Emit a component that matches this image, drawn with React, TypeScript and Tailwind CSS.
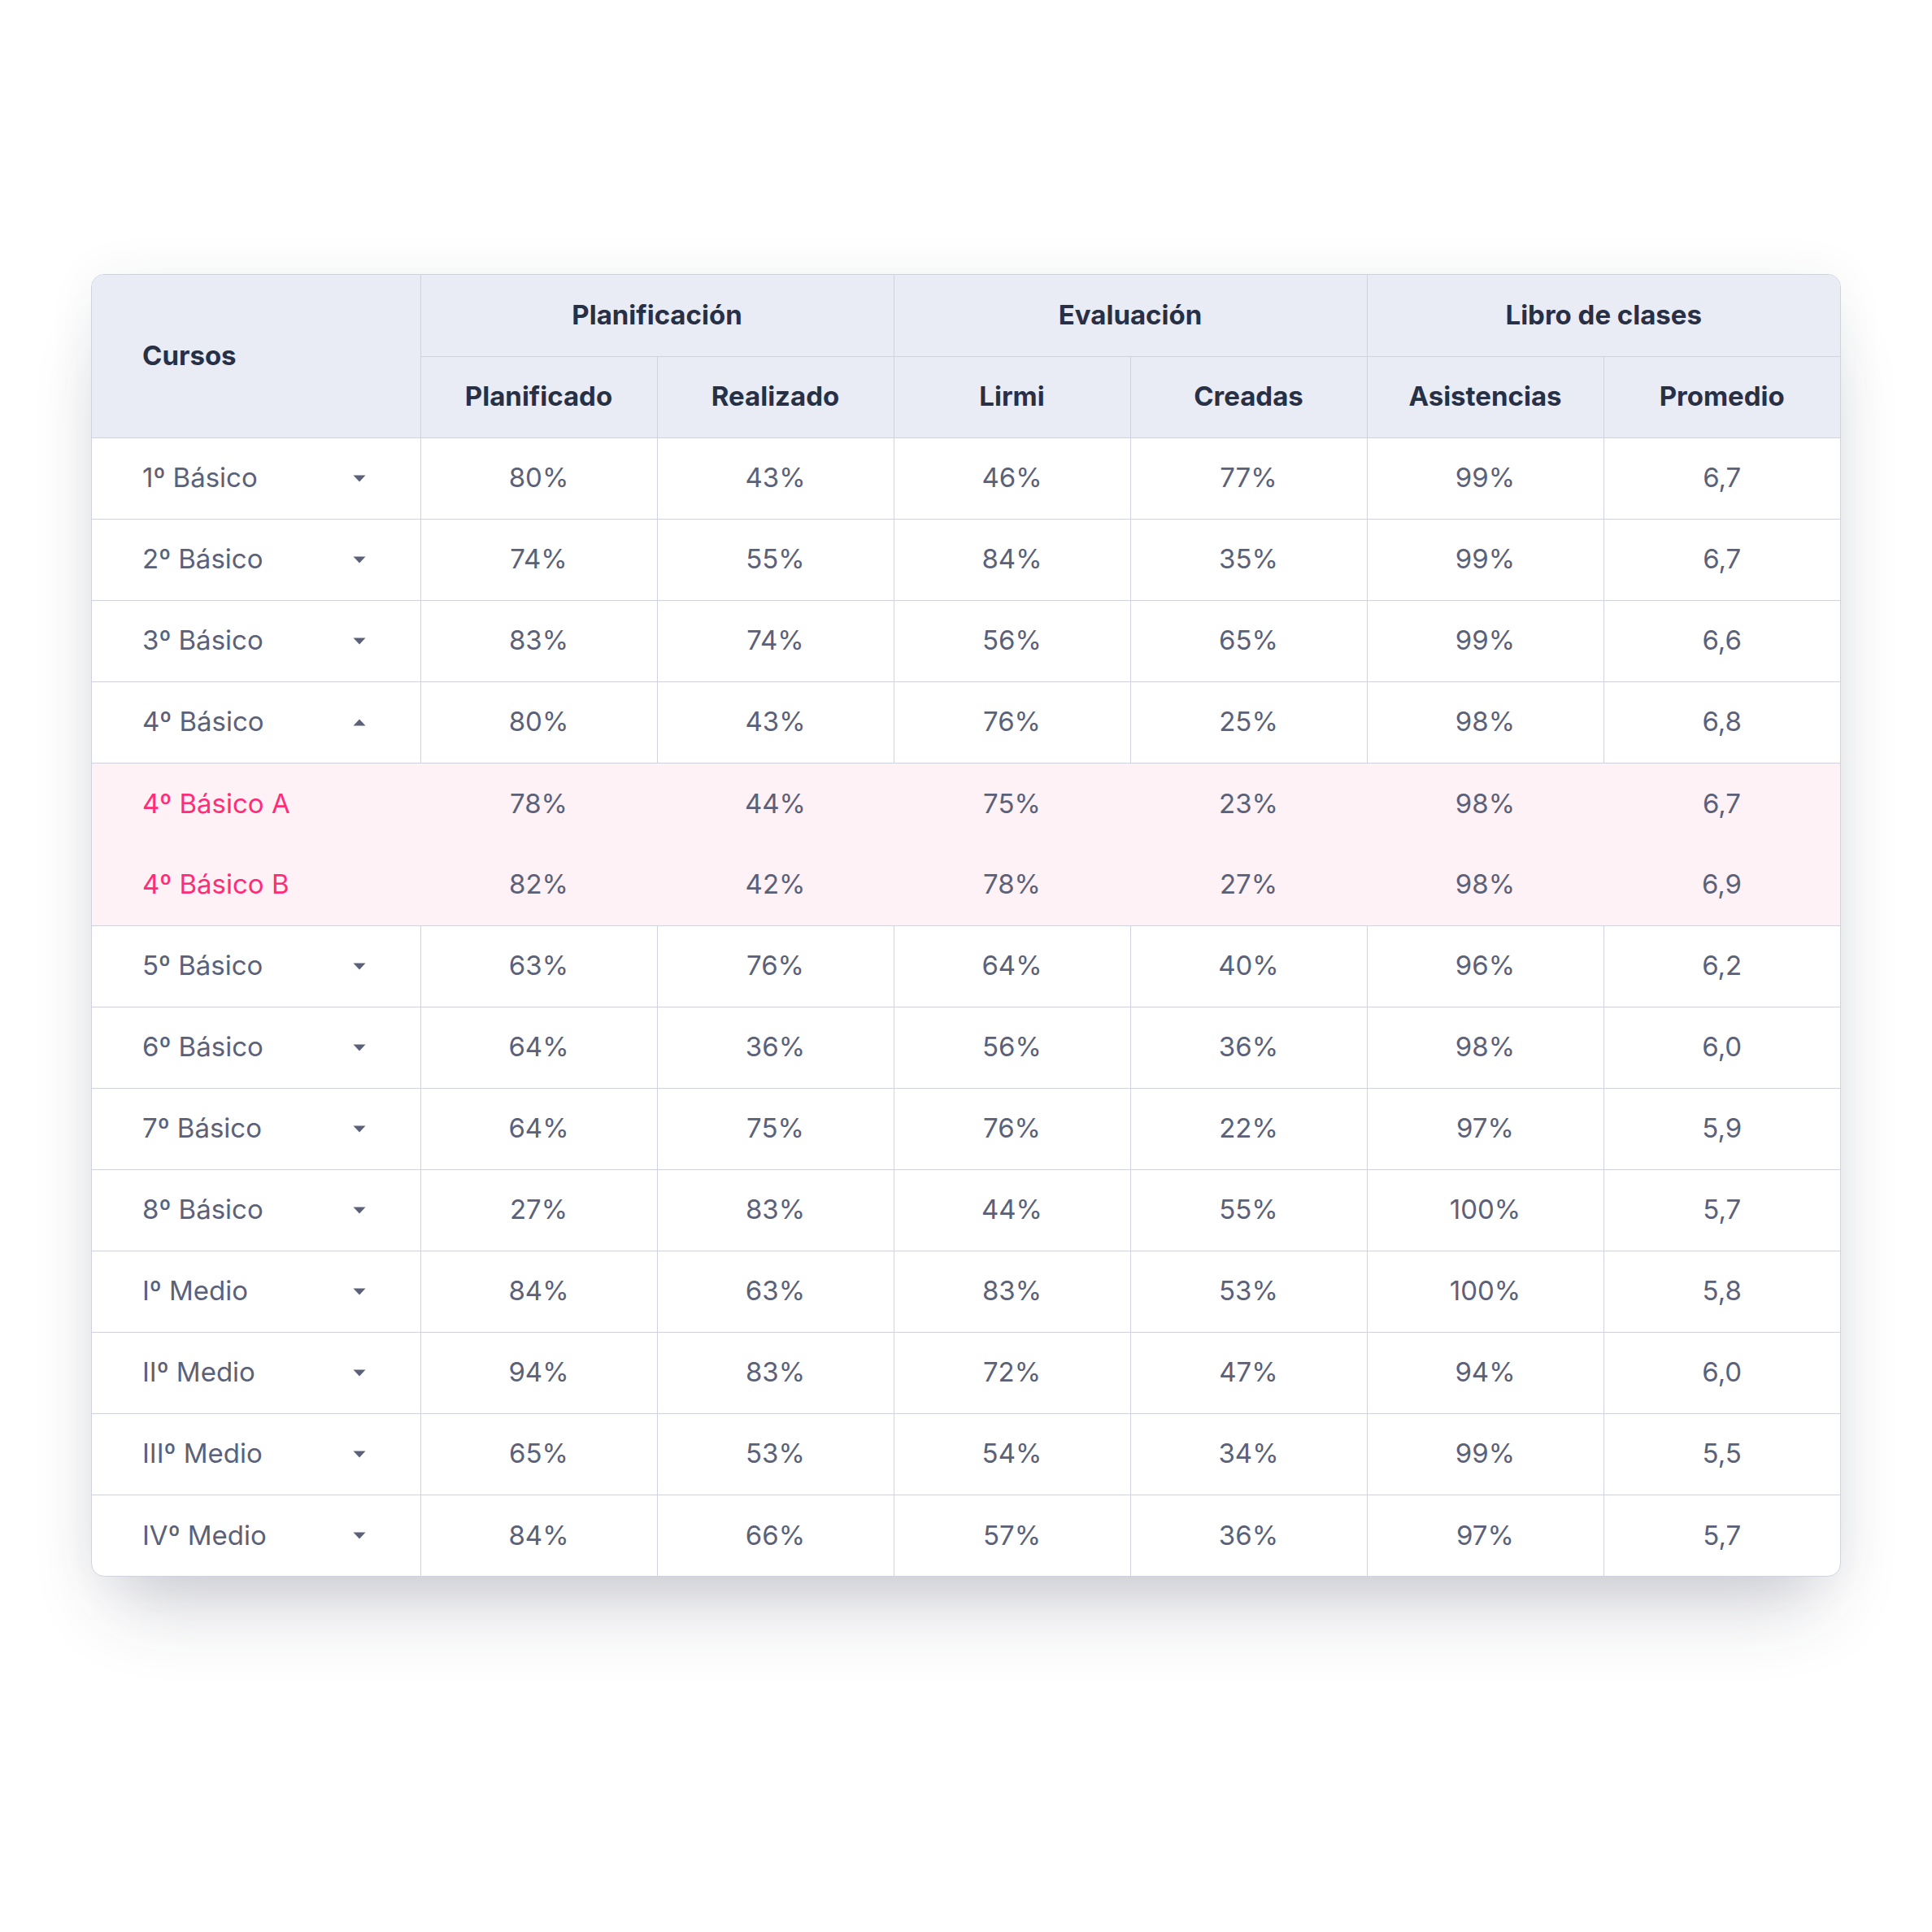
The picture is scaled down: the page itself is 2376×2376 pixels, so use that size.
import React from 'react';

type Row = {
  name: string;
  values: string[];
  open?: boolean;
  sub?: { name: string; values: string[] }[];
};

const rows: Row[] = [
  { name: '1º Básico', values: ['80%', '43%', '46%', '77%', '99%', '6,7'] },
  { name: '2º Básico', values: ['74%', '55%', '84%', '35%', '99%', '6,7'] },
  { name: '3º Básico', values: ['83%', '74%', '56%', '65%', '99%', '6,6'] },
  {
    name: '4º Básico',
    values: ['80%', '43%', '76%', '25%', '98%', '6,8'],
    open: true,
    sub: [
      { name: '4º Básico A', values: ['78%', '44%', '75%', '23%', '98%', '6,7'] },
      { name: '4º Básico B', values: ['82%', '42%', '78%', '27%', '98%', '6,9'] },
    ],
  },
  { name: '5º Básico', values: ['63%', '76%', '64%', '40%', '96%', '6,2'] },
  { name: '6º Básico', values: ['64%', '36%', '56%', '36%', '98%', '6,0'] },
  { name: '7º Básico', values: ['64%', '75%', '76%', '22%', '97%', '5,9'] },
  { name: '8º Básico', values: ['27%', '83%', '44%', '55%', '100%', '5,7'] },
  { name: 'Iº Medio', values: ['84%', '63%', '83%', '53%', '100%', '5,8'] },
  { name: 'IIº Medio', values: ['94%', '83%', '72%', '47%', '94%', '6,0'] },
  { name: 'IIIº Medio', values: ['65%', '53%', '54%', '34%', '99%', '5,5'] },
  { name: 'IVº Medio', values: ['84%', '66%', '57%', '36%', '97%', '5,7'] },
];

const Caret = ({ up }: { up?: boolean }) => (
  <svg width="16" height="9" viewBox="0 0 16 9" className="shrink-0">
    {up ? <path d="M8 0.5 L15.5 8.5 H0.5 Z" fill="#5b6178" /> : <path d="M0.5 0.5 H15.5 L8 8.5 Z" fill="#5b6178" />}
  </svg>
);

const App: React.FC = () => {
  return (
    <div
      className="min-h-[2376px] w-full bg-white flex justify-center pt-[337px]"
      style={{ fontFamily: 'Inter, "Noto Sans", sans-serif' }}
    >
      <div className="w-[2152px] h-fit rounded-2xl border border-[#d0d3de] overflow-hidden bg-white shadow-[0_60px_90px_-30px_rgba(40,45,70,0.24),0_0_60px_rgba(40,45,70,0.06)]">
        <table className="w-full border-collapse table-fixed text-[33px]">
          <colgroup>
            <col className="w-[404px]" />
            <col />
            <col />
            <col />
            <col />
            <col />
            <col />
          </colgroup>
          <thead className="bg-[#e9ecf4] text-[#283046]">
            <tr className="h-[100px]">
              <th rowSpan={2} className="text-left pl-[62px] font-bold">Cursos</th>
              <th colSpan={2} className="border-l border-[#d0d3de] font-bold">Planificación</th>
              <th colSpan={2} className="border-l border-[#d0d3de] font-bold">Evaluación</th>
              <th colSpan={2} className="border-l border-[#d0d3de] font-bold">Libro de clases</th>
            </tr>
            <tr className="h-[100px] border-t border-[#d0d3de]">
              {['Planificado', 'Realizado', 'Lirmi', 'Creadas', 'Asistencias', 'Promedio'].map((h) => (
                <th key={h} className="border-l border-[#d0d3de] font-bold">{h}</th>
              ))}
            </tr>
          </thead>
          <tbody className="text-[#5b6178]">
            {rows.map((r) => (
              <React.Fragment key={r.name}>
                <tr className="h-[100px] border-t border-[#d0d3de]">
                  <td className="pl-[62px] pr-[67px]">
                    <div className="flex items-center justify-between">
                      <span>{r.name}</span>
                      <Caret up={r.open} />
                    </div>
                  </td>
                  {r.values.map((v, i) => (
                    <td key={i} className="text-center border-l border-[#d0d3de]">{v}</td>
                  ))}
                </tr>
                {r.sub &&
                  r.sub.map((s, j) => (
                    <tr key={s.name} className={`h-[100px] bg-[#fff2f6] ${j === 0 ? 'border-t border-[#d0d3de]' : ''}`}>
                      <td className="pl-[62px] text-[#ff2d78]">{s.name}</td>
                      {s.values.map((v, i) => (
                        <td key={i} className="text-center">{v}</td>
                      ))}
                    </tr>
                  ))}
              </React.Fragment>
            ))}
          </tbody>
        </table>
      </div>
    </div>
  );
};

export default App;
